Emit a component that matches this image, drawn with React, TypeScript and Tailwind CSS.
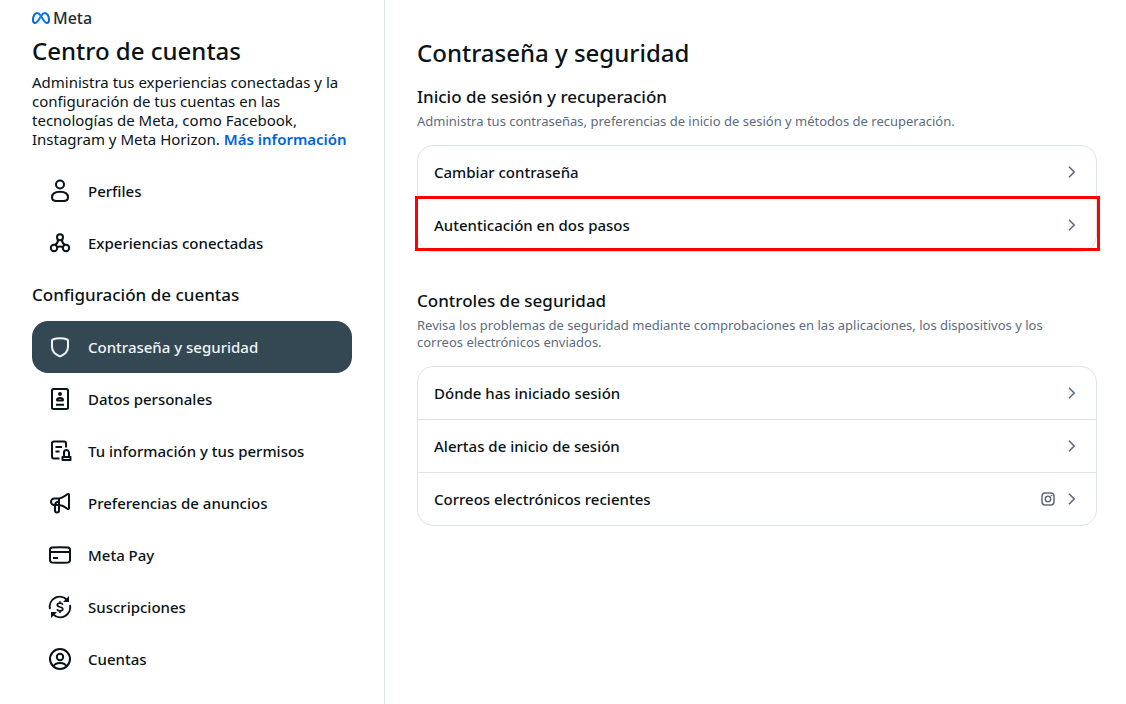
import type { ReactNode } from "react";

function Icon({ children }: { children: ReactNode }) {
  return (
    <svg
      aria-hidden="true"
      viewBox="0 0 24 24"
      fill="none"
      stroke="currentColor"
      strokeWidth="2"
      strokeLinejoin="round"
      className="size-6 shrink-0"
    >
      {children}
    </svg>
  );
}

const icons = {
  profile: (
    <Icon>
      <circle cx="12" cy="5.500" r="4" />
      <path d="M4 18.600C4 15 7 12.800 12 12.800s8 2.200 8 5.800c0 2.300-1.700 3.400-4.400 3.400H8.400C5.700 22 4 20.900 4 18.600Z" />
    </Icon>
  ),
  connected: (
    <Icon>
      <circle cx="12" cy="6.300" r="3" />
      <circle cx="6" cy="17" r="3.200" />
      <circle cx="18" cy="17" r="3.200" />
      <path d="M10 8.500c.1 2.300-1 4.300-3 5.600M14 8.500c-.1 2.300 1 4.300 3 5.600M9 16c1.900-.6 4.100-.6 6 0" />
    </Icon>
  ),
  shield: (
    <Icon>
      <path d="M12 3.200c2.900 0 5.300.5 7.200 1.300.5.200.8.700.8 1.200v6.200c0 4.500-3.300 7.300-7.300 9.200a1.600 1.600 0 0 1-1.400 0C7.300 19.200 4 16.400 4 11.900V5.700c0-.5.3-1 .8-1.200C6.700 3.700 9.100 3.200 12 3.200Z" />
    </Icon>
  ),
  personal: (
    <Icon>
      <rect x="4" y="2" width="16" height="20" rx="1.500" />
      <circle cx="12" cy="7" r="2" fill="currentColor" stroke="none" />
      <path d="M9 13c0-1.200 1.200-1.900 3-1.900s3 .7 3 1.900c0 .3-.2.500-.6.500H9.600c-.4 0-.6-.2-.6-.5ZM8 17.800h8" />
    </Icon>
  ),
  permissions: (
    <Icon>
      <path d="M18 8.500V4.500c0-1.200-.6-2-2-2H6c-1.200 0-2 .8-2 2v13c0 1.200.8 2 2 2h5.500" />
      <path d="M7.500 8h6.500M7.500 12.500h4" />
      <path d="M16 18v-4.400a2.500 2.500 0 0 1 5 0V18M14.500 18h8v3h-8Z" />
    </Icon>
  ),
  ads: (
    <Icon>
      <path d="M19.300 3.300c.9-.7 1.700-.4 1.700.6v13.200c0 1-.8 1.300-1.700.6-2.300-1.900-4.700-3.500-8.300-3.700H6.300a3.300 3.300 0 0 1 0-6.600H11c3.600-.2 6-2.200 8.300-4.100Z" />
      <path d="M11 7.400v11.900c0 1.400-.7 2.200-2 2.200s-2-.8-2-2.200v-5c0-2 1.300-3.400 4-3.800" />
    </Icon>
  ),
  card: (
    <Icon>
      <path d="M4 4.600c4-.4 12-.4 16 0 1.400.2 2 1 2 2.400v10c0 1.400-.6 2.200-2 2.400-4 .4-12 .4-16 0-1.400-.2-2-1-2-2.400V7c0-1.400.6-2.200 2-2.400ZM2 9h20M5 15h5" />
    </Icon>
  ),
  subscriptions: (
    <Icon>
      <path d="M2 14A10 10 0 0 1 19 4.900M22 10A10 10 0 0 1 5 19.100" />
      <path d="M21 1v6h-6ZM3 23v-6h6Z" fill="currentColor" stroke="none" />
      <path d="M14.800 9.800c-.4-1-1.400-1.600-2.800-1.600-1.600 0-2.700.7-2.700 1.900 0 2.700 5.500 1 5.500 3.900 0 1.200-1.200 1.900-2.800 1.900-1.500 0-2.600-.6-3-1.700M12 6.200v2M12 15.900v2" strokeWidth="1.700" />
    </Icon>
  ),
  account: (
    <Icon>
      <circle cx="12" cy="12" r="10" />
      <circle cx="12" cy="10" r="3.200" />
      <path d="M5.500 19.200c1-2.200 3.300-3.200 6.500-3.200s5.500 1 6.500 3.200" />
    </Icon>
  ),
};

type NavEntry = { label: string; icon: ReactNode; active?: boolean };

const general: NavEntry[] = [
  { label: "Perfiles", icon: icons.profile },
  { label: "Experiencias conectadas", icon: icons.connected },
];

const settings: NavEntry[] = [
  { label: "Contraseña y seguridad", icon: icons.shield, active: true },
  { label: "Datos personales", icon: icons.personal },
  { label: "Tu información y tus permisos", icon: icons.permissions },
  { label: "Preferencias de anuncios", icon: icons.ads },
  { label: "Meta Pay", icon: icons.card },
  { label: "Suscripciones", icon: icons.subscriptions },
  { label: "Cuentas", icon: icons.account },
];

function NavList({ entries }: { entries: NavEntry[] }) {
  return (
    <ul>
      {entries.map(({ label, icon, active }) => (
        <li key={label}>
          <a
            href="#"
            aria-current={active ? "page" : undefined}
            className={
              active
                ? "flex h-13 items-center gap-4 rounded-2xl bg-[#344854] px-4 text-[#f1f4f7]"
                : "flex h-13 items-center gap-4 rounded-2xl px-4"
            }
          >
            {icon}
            <span className="text-[15px] font-medium">{label}</span>
          </a>
        </li>
      ))}
    </ul>
  );
}

function MetaLogo() {
  return (
    <div className="flex h-5 items-center gap-[3px] text-[#1c2b33]">
      <svg aria-hidden="true" viewBox="0 0 18 12" fill="none" className="h-3 w-[18px]">
        <defs>
          <linearGradient id="meta-blue" x1="0" x2="1">
            <stop offset="0" stopColor="#0064e0" />
            <stop offset="0.5" stopColor="#0082fb" />
            <stop offset="1" stopColor="#0064e0" />
          </linearGradient>
        </defs>
        <path
          d="M9 4C7.700 1.900 6.500 1 5.100 1 2.800 1 1 4.300 1 7.900 1 9.900 1.900 11 3.300 11 5 11 6.300 8.900 9 4c1.300-2.100 2.500-3 3.900-3C15.200 1 17 4.300 17 7.900c0 2-.9 3.100-2.300 3.100C13 11 11.700 8.900 9 4Z"
          stroke="url(#meta-blue)"
          strokeWidth="2"
          strokeLinejoin="round"
        />
      </svg>
      <span className="text-base font-medium">Meta</span>
    </div>
  );
}

function InstagramIcon() {
  return (
    <svg role="img" aria-label="Instagram" viewBox="0 0 14 14" fill="none" stroke="currentColor" strokeWidth="1.500" className="size-3.5">
      <rect x="1" y="1" width="12" height="12" rx="3.200" />
      <circle cx="7" cy="7" r="2.700" />
      <circle cx="10.500" cy="3.500" r="0.800" fill="currentColor" stroke="none" />
    </svg>
  );
}

function Chevron() {
  return (
    <svg aria-hidden="true" viewBox="0 0 16 16" fill="none" stroke="currentColor" strokeWidth="1.600" className="size-4">
      <path d="m5 2.800 5.200 5.200L5 13.200" />
    </svg>
  );
}

type Row = { label: string; instagram?: boolean; highlighted?: boolean };

function Section({ title, description, rows }: { title: string; description: string; rows: Row[] }) {
  return (
    <section>
      <h2 className="text-[17px] leading-[18px] font-medium">{title}</h2>
      <p className="mt-[7px] max-w-[650px] text-[13px] leading-[17px] text-[#5d6c7b]">{description}</p>
      <ul className="mt-[15px] divide-y divide-[#dee3e9] rounded-2xl border border-[#dee3e9]">
        {rows.map(({ label, instagram, highlighted }) => (
          <li key={label} className="relative">
            <button type="button" className="flex h-13 w-full items-center justify-between px-4 text-left">
              <span className="text-[15px] font-medium">{label}</span>
              <span className="flex items-center gap-[9px] text-[#5d6c7b]">
                {instagram && <InstagramIcon />}
                <Chevron />
              </span>
            </button>
            {highlighted && (
              <span className="pointer-events-none absolute -top-[3px] -right-1 bottom-0 -left-[3px] border-3 border-[#ff0000]" />
            )}
          </li>
        ))}
      </ul>
    </section>
  );
}

export default function App() {
  return (
    <div className="flex min-h-screen bg-white font-['Noto_Sans',sans-serif] text-[#0a1317]">
      <aside className="w-[385px] shrink-0 border-r border-[#dee3e9] px-8 pt-2">
        <MetaLogo />
        <h1 className="mt-[9px] text-2xl leading-7 font-medium">Centro de cuentas</h1>
        <p className="mt-2 text-[15px] leading-[19px]">
          Administra tus experiencias conectadas y la configuración de tus cuentas en las tecnologías de Meta, como
          Facebook, Instagram y Meta Horizon.{" "}
          <a href="#" className="font-semibold text-[#0064e0]">
            Más información
          </a>
        </p>
        <nav className="mt-4 mb-4" aria-label="Centro de cuentas">
          <NavList entries={general} />
          <h2 className="flex h-13 items-center text-[17px] font-medium">Configuración de cuentas</h2>
          <NavList entries={settings} />
        </nav>
      </aside>
      <main className="min-w-0 flex-1 pt-[39px] pr-7 pb-8 pl-8">
        <div className="flex max-w-[680px] flex-col">
          <h1 className="mb-[21px] text-2xl leading-7 font-medium">Contraseña y seguridad</h1>
          <div className="flex flex-col gap-10">
            <Section
              title="Inicio de sesión y recuperación"
              description="Administra tus contraseñas, preferencias de inicio de sesión y métodos de recuperación."
              rows={[{ label: "Cambiar contraseña" }, { label: "Autenticación en dos pasos", highlighted: true }]}
            />
            <Section
              title="Controles de seguridad"
              description="Revisa los problemas de seguridad mediante comprobaciones en las aplicaciones, los dispositivos y los correos electrónicos enviados."
              rows={[
                { label: "Dónde has iniciado sesión" },
                { label: "Alertas de inicio de sesión" },
                { label: "Correos electrónicos recientes", instagram: true },
              ]}
            />
          </div>
        </div>
      </main>
    </div>
  );
}
